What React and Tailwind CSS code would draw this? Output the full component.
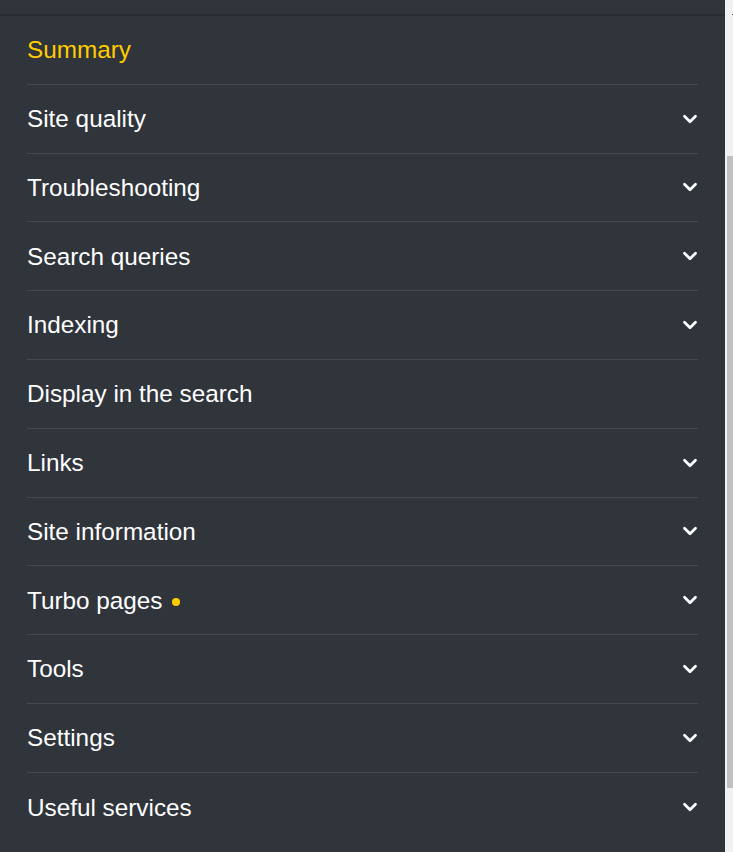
import { ChevronDown } from 'lucide-react'

const items = [
  { label: 'Summary', active: true },
  { label: 'Site quality', chevron: true },
  { label: 'Troubleshooting', chevron: true },
  { label: 'Search queries', chevron: true },
  { label: 'Indexing', chevron: true },
  { label: 'Display in the search' },
  { label: 'Links', chevron: true },
  { label: 'Site information', chevron: true },
  { label: 'Turbo pages', chevron: true, dot: true },
  { label: 'Tools', chevron: true },
  { label: 'Settings', chevron: true },
  { label: 'Useful services', chevron: true },
]

export default function App() {
  return (
    <div className="flex h-[852px] w-[733px] overflow-hidden bg-[#f1f1f1]" style={{ fontFamily: '"Liberation Sans", Arial, sans-serif' }}>
      <div className="flex w-[725px] flex-col bg-[#30343b]">
        <div className="h-[16px] shrink-0 border-b-2 border-[#292c30] bg-[#30343a]" />
        <nav className="flex flex-col px-[27px]">
          {items.map((item, i) => (
            <MenuRow key={item.label} item={item} last={i === items.length - 1} />
          ))}
        </nav>
      </div>
      <div className="relative flex-1">
        <div className="absolute right-0 top-[14px] h-px w-px bg-[#505050]" />
        <div className="absolute right-0 top-[156px] h-[632px] w-[6px] bg-[#c1c1c1]" />
      </div>
    </div>
  )
}

function MenuRow({ item, last }) {
  return (
    <div className={`flex h-[68.8px] shrink-0 items-center justify-between ${last ? '' : 'border-b border-[#464a50]'}`}>
      <div className="flex items-center pt-[1px]">
        <span className={`text-[24.3px] leading-none ${item.active ? 'text-[#ffcc00]' : 'text-white'}`}>{item.label}</span>
        {item.dot && <span className="ml-[9px] mt-[2px] h-[8px] w-[8px] rounded-full bg-[#ffcc00]" />}
      </div>
      {item.chevron && <ChevronDown size={22} strokeWidth={3} className="mr-[-3px] text-white" />}
    </div>
  )
}
